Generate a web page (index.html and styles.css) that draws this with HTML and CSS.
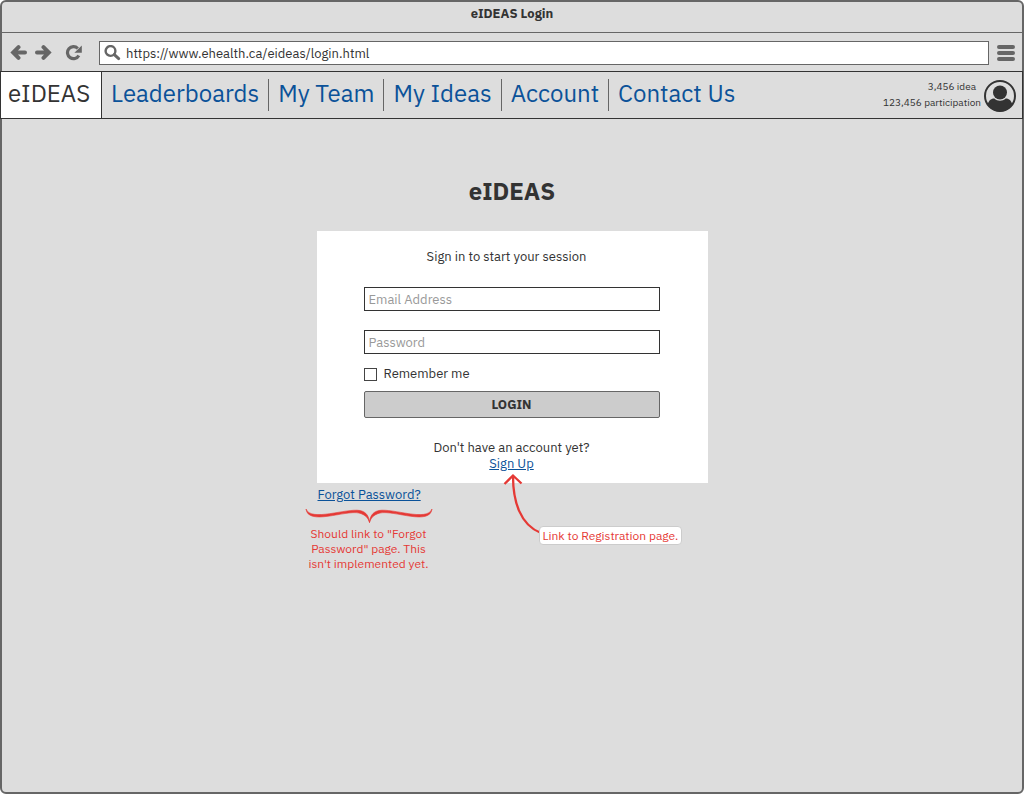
FILE: index.html
```html
<!DOCTYPE html>
<html lang="en">
<head>
<meta charset="utf-8">
<meta name="viewport" content="width=device-width, initial-scale=1">
<title>eIDEAS Login</title>
<link rel="stylesheet" href="styles.css">
</head>
<body>
<div class="browser">
  <header class="titlebar">eIDEAS Login</header>
  <div class="toolbar">
    <div class="history">
      <button class="icon-button" type="button" aria-label="Back">
        <svg width="17" height="16" viewBox="0 0 17 16"><path d="M8.500 2.200 3.200 7.500l5.300 5.300M4 7.500H15" fill="none" stroke="currentColor" stroke-width="4" stroke-linecap="round"/></svg>
      </button>
      <button class="icon-button" type="button" aria-label="Forward">
        <svg width="17" height="16" viewBox="0 0 17 16"><path d="m8.500 2.200 5.300 5.300-5.300 5.300M13 7.500H2" fill="none" stroke="currentColor" stroke-width="4" stroke-linecap="round"/></svg>
      </button>
    </div>
    <button class="icon-button" type="button" aria-label="Reload">
      <svg width="17" height="16" viewBox="0 0 17 16"><path d="M12.800 3.500A6 6 0 1 0 13.800 10.500" fill="none" stroke="currentColor" stroke-width="3.200"/><path d="M16.800 .5v7.200H9.400z" fill="currentColor"/></svg>
    </button>
    <label class="address">
      <svg width="17" height="16" viewBox="0 0 17 16" aria-hidden="true"><circle cx="6.500" cy="6" r="4.900" fill="none" stroke="currentColor" stroke-width="2.400"/><path d="m10.300 9.600 4.400 4" stroke="currentColor" stroke-width="3" stroke-linecap="round"/></svg>
      <input class="address-input" type="text" aria-label="Address" value="https://www.ehealth.ca/eideas/login.html">
    </label>
    <button class="icon-button" type="button" aria-label="Menu">
      <svg width="18" height="16" viewBox="0 0 18 16"><path d="M2 2h14M2 8h14M2 14h14" stroke="currentColor" stroke-width="4" stroke-linecap="round"/></svg>
    </button>
  </div>

  <nav class="nav">
    <a class="brand" href="#">eIDEAS</a>
    <ul class="menu">
      <li class="menu-item"><a class="menu-link" href="#">Leaderboards</a></li>
      <li class="menu-item"><a class="menu-link" href="#">My Team</a></li>
      <li class="menu-item"><a class="menu-link" href="#">My Ideas</a></li>
      <li class="menu-item"><a class="menu-link" href="#">Account</a></li>
      <li class="menu-item"><a class="menu-link" href="#">Contact Us</a></li>
    </ul>
    <div class="profile">
      <div class="points">
        <span class="idea-points">3,456 idea</span>
        <span>123,456 participation</span>
      </div>
      <svg width="32" height="33" viewBox="0 -1 32 33" aria-hidden="true"><circle cx="16" cy="16" r="15" fill="none" stroke="currentColor" stroke-width="2"/><circle cx="16" cy="12.500" r="7" fill="currentColor"/><path d="M3.500 24.500C5 20 7.500 18.500 10.300 18.500c3.200 3 8.200 3 11.400 0 2.800 0 5.300 1.500 6.800 6C26 28.500 21.500 31.500 16 31.500S6 28.500 3.500 24.500z" fill="currentColor"/></svg>
    </div>
  </nav>

  <main class="page">
    <h1 class="heading">eIDEAS</h1>
    <div class="login">
      <form class="card">
        <p class="intro">Sign in to start your session</p>
        <input class="field" type="email" placeholder="Email Address" aria-label="Email Address">
        <input class="field password" type="password" placeholder="Password" aria-label="Password">
        <label class="remember"><input class="checkbox" type="checkbox">Remember me</label>
        <button class="submit" type="button">LOGIN</button>
        <p class="signup">Don't have an account yet?<br><a class="link" href="#">Sign Up</a></p>
      </form>
      <a class="link forgot" href="#">Forgot Password?</a>
      <aside class="note">
        <svg class="brace" width="126" height="14" viewBox="0 0 126 14" aria-hidden="true"><path d="M0 0C5 13 40-1 54 1.500 61 3 63 8 63.500 13.500 64 8 66 3 73 1.500 87-1 121 13 126 0 124 17 88 1 74 4 67 6 65 9 63.500 13.500 62 9 60 6 53 4 39 1 2 17 0 0z" fill="currentColor" stroke="currentColor" stroke-width=".6"/></svg>
        Should link to "Forgot Password" page. This isn't implemented yet.
      </aside>
      <svg class="arrow" width="40" height="62" viewBox="0 0 40 62" aria-hidden="true"><path d="M10 3C10 28 17 52 38 60M1.500 11 10 2.500 18.500 10.500" fill="none" stroke="currentColor" stroke-width="2.300"/></svg>
      <span class="callout">Link to Registration page.</span>
    </div>
  </main>
</div>
</body>
</html>
```
FILE: styles.css
```css
* {
  box-sizing: border-box;
}

body {
  margin: 0;
  background: #fff;
  color: #333;
  font: 13px/16px "IBM Plex Sans", Roboto, "Liberation Sans", sans-serif;
}

svg {
  display: block;
  flex: none;
}

p {
  margin: 0;
}

input,
button {
  font: inherit;
  color: inherit;
}

.browser {
  min-height: 100vh;
  border: 2px solid #666;
  border-radius: 6px;
  background: #ddd;
}

.titlebar {
  padding: 4px 0 10px;
  border-bottom: 1px solid #666;
  font-weight: 700;
  text-align: center;
}

.toolbar {
  display: flex;
  align-items: center;
  gap: 8px;
  padding: 8px 7px 6px 8px;
  color: #666;
}

.history {
  display: flex;
  gap: 8px;
  margin-right: 5px;
}

.icon-button {
  padding: 0;
  border: 0;
  background: none;
  color: #666;
}

.address {
  display: flex;
  flex: 1;
  align-items: center;
  gap: 5px;
  height: 24px;
  margin-left: 9px;
  padding: 0 4px;
  border: 1px solid #666;
  background: #fff;
}

.address-input {
  flex: 1;
  min-width: 0;
  padding: 2px 0 0;
  border: 0;
  outline: 0;
  background: none;
  color: #333;
}

.nav {
  display: flex;
  min-height: 48px;
  margin: 0 -1px 0 -2px;
  border: 1px solid #333;
  font-size: 24px;
  line-height: 32px;
}

.brand {
  padding: 5px 11px 9px 7px;
  border-right: 1px solid #333;
  background: #fff;
  color: #333;
  text-decoration: none;
}

.menu {
  display: flex;
  margin: 0;
  padding: 7px 0;
  list-style: none;
}

.menu-item {
  padding: 0 9px;
}

.menu-item + .menu-item {
  border-left: 1px solid #666;
}

.menu-link {
  display: block;
  margin-top: -2px;
  color: #0b5299;
  text-decoration: none;
}

.profile {
  display: flex;
  align-items: center;
  gap: 3px;
  margin-left: auto;
  padding-right: 6px;
}

.points {
  display: grid;
  justify-items: end;
  font-size: 10px;
  line-height: 16px;
}

.idea-points {
  padding-right: 5px;
}

.page {
  padding: 57px 16px 24px;
}

.heading {
  margin: 0 0 25px;
  font-size: 24px;
  line-height: 30px;
  text-align: center;
}

.login {
  position: relative;
  max-width: 391px;
  margin: 0 auto;
}

.card {
  display: flex;
  flex-direction: column;
  padding: 18px 48px 11px 47px;
  background: #fff;
}

.intro {
  margin-bottom: 22px;
  padding-right: 10px;
  text-align: center;
}

.field {
  width: 100%;
  height: 24px;
  padding: 0 4px;
  border: 1px solid #333;
  border-radius: 0;
  background: #fff;
}

.field::placeholder {
  color: #999;
  opacity: 1;
}

.password {
  margin-top: 19px;
}

.remember {
  display: flex;
  align-items: center;
  gap: 7px;
  margin: 12px 0 9px;
}

.checkbox {
  width: 13px;
  height: 13px;
  margin: 0;
  border: 1px solid #444;
  background: #fff;
  appearance: none;
}

.checkbox:checked {
  background: #666;
}

.submit {
  height: 27px;
  padding: 0;
  border: 1px solid #666;
  border-radius: 2px;
  background: #ccc;
  font-weight: 700;
}

.signup {
  margin-top: 22px;
  text-align: center;
}

.link {
  color: #0b5299;
}

.forgot {
  display: block;
  width: max-content;
  margin: 4px 0 6px 1px;
}

.note {
  width: 126px;
  margin-left: -11px;
  color: #e53935;
  font-size: 12px;
  line-height: 15px;
  text-align: center;
}

.brace {
  margin-bottom: 3px;
  overflow: visible;
}

.arrow {
  position: absolute;
  top: 242px;
  left: 186px;
  color: #e53935;
}

.callout {
  position: absolute;
  top: 295px;
  left: 222px;
  padding: 0 3px;
  border: 1px solid #ccc;
  border-radius: 4px;
  background: #fff;
  color: #e53935;
  font-size: 12px;
  line-height: 17px;
  white-space: nowrap;
}
```
